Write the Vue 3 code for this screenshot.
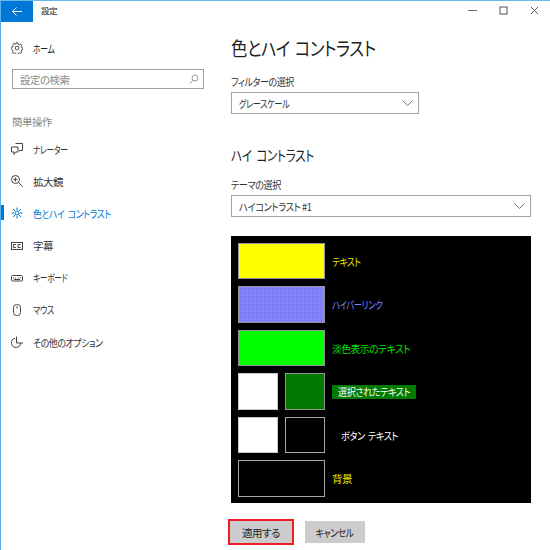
<script setup>
const navItems = [
  { label: 'ナレーター', icon: 'narrator', fit: 'c74' },
  { label: '拡大鏡', icon: 'zoom', fit: '' },
  { label: '色とハイ コントラスト', icon: 'sun', active: true, fit: 'c85' },
  { label: '字幕', icon: 'cc', fit: '' },
  { label: 'キーボード', icon: 'kbd', fit: 'c74' },
  { label: 'マウス', icon: 'mouse', fit: 'c78' },
  { label: 'その他のオプション', icon: 'other', fit: 'c85' },
]
</script>

<template>
  <div class="window">
    <header class="titlebar">
      <button class="back" aria-label="戻る">
        <svg width="10" height="9" viewBox="0 0 10 9" fill="none" stroke="#fff" stroke-width="1"><path d="M0.500 4.500H10M4.500 0.500L0.500 4.500L4.500 8.500" /></svg>
      </button>
      <span class="apptitle">設定</span>
      <div class="winctl">
        <svg width="9" height="9" viewBox="0 0 9 9" fill="none" stroke="#666"><path d="M0 4.500H9" /></svg>
        <svg width="9" height="9" viewBox="0 0 9 9" fill="none" stroke="#555"><rect x="1" y="1" width="7" height="7" /></svg>
        <svg width="9" height="9" viewBox="0 0 9 9" fill="none" stroke="#555"><path d="M1 1L8 8M8 1L1 8" /></svg>
      </div>
    </header>
    <div class="body">
      <aside class="sidebar">
        <div class="home">
          <svg class="ico" width="12" height="12" viewBox="0 0 14 14" fill="none" stroke="#444" stroke-width="1.100">
            <circle cx="7" cy="7" r="2.200" />
            <path d="M6 1h2l.4 1.700 1.400.6 1.500-.9 1.300 1.400-.9 1.400.6 1.400 1.700.4v1.900l-1.700.4-.6 1.400.9 1.500-1.300 1.300-1.500-.9-1.400.6-.4 1.700H6l-.4-1.700-1.400-.6-1.500.9-1.300-1.300.9-1.500-.6-1.400L.5 8V6.100l1.700-.4.6-1.400-.9-1.400 1.300-1.400 1.500.9 1.400-.6z" />
          </svg>
          <span class="fit c75">ホーム</span>
        </div>
        <div class="search">
          <span>設定の検索</span>
          <svg width="10" height="10" viewBox="0 0 10 10" fill="none" stroke="#999"><circle cx="6" cy="4" r="3" /><path d="M4 6.200L.8 9.500" /></svg>
        </div>
        <div class="group">簡単操作</div>
        <nav class="nav">
          <div v-for="item in navItems" :key="item.label" class="nav-item" :class="{ active: item.active }">
            <span class="indicator"></span>
            <svg class="ico" width="12" height="12" viewBox="0 0 12 12" fill="none" stroke="currentColor" stroke-width="1">
              <template v-if="item.icon === 'narrator'">
                <path d="M4.500 .5H11.500V7.500H8M.5 4H7V9H4.500L3 11.500V9H.5z" />
              </template>
              <template v-else-if="item.icon === 'zoom'">
                <circle cx="4.500" cy="4.500" r="4" /><path d="M7.500 7.500l4 4M2.500 4.500h4M4.500 2.500v4" />
              </template>
              <template v-else-if="item.icon === 'sun'">
                <circle cx="6" cy="6" r="2" /><path d="M6 .5v2.500M6 9v2.500M.5 6H3M9 6h2.500M2 2l2 2M8 8l2 2M10 2L8 4M4 8l-2 2" />
              </template>
              <template v-else-if="item.icon === 'cc'">
                <rect x=".5" y="2.500" width="11" height="7" /><path d="M5 4.500H2.500v3H5M9.500 4.500H7v3h2.500" />
              </template>
              <template v-else-if="item.icon === 'kbd'">
                <rect x=".5" y="3.500" width="11" height="5.500" rx="1" /><path d="M2 6h1M4 6h1M6.500 6h1M9 6h1M3 7.500h6" />
              </template>
              <template v-else-if="item.icon === 'mouse'">
                <rect x="2.500" y=".5" width="7" height="11" rx="3" /><path d="M6 2v2.500" />
              </template>
              <template v-else>
                <path d="M4 2.300A4.600 4.600 0 1 0 9.600 7M5.500 .5V7H12" />
              </template>
            </svg>
            <span class="fit" :class="item.fit">{{ item.label }}</span>
          </div>
        </nav>
      </aside>
      <main class="main">
        <h1 class="fit c86">色とハイ コントラスト</h1>
        <label class="lbl first fit c86">フィルターの選択</label>
        <div class="combo short">
          <span class="fit c78">グレースケール</span>
          <svg width="11" height="6" viewBox="0 0 11 6" fill="none" stroke="#777"><path d="M.5.5l5 5 5-5" /></svg>
        </div>
        <h2 class="fit c81">ハイ コントラスト</h2>
        <label class="lbl second fit c87">テーマの選択</label>
        <div class="combo">
          <span class="fit c89">ハイコントラスト #1</span>
          <svg width="11" height="6" viewBox="0 0 11 6" fill="none" stroke="#777"><path d="M.5.5l5 5 5-5" /></svg>
        </div>
        <section class="preview">
          <div class="row">
            <div class="sw wide yellow"></div>
            <span class="fit c83 t-yellow">テキスト</span>
          </div>
          <div class="row tall">
            <div class="sw wide violet"></div>
            <span class="fit c80 t-violet">ハイパーリンク</span>
          </div>
          <div class="row">
            <div class="sw wide lime"></div>
            <span class="fit c93 t-lime">淡色表示のテキスト</span>
          </div>
          <div class="row tall">
            <div class="pair">
              <div class="sw white"></div>
              <div class="sw green"></div>
            </div>
            <span class="t-sel"><span class="fit c87">選択されたテキスト</span></span>
          </div>
          <div class="row">
            <div class="pair">
              <div class="sw white"></div>
              <div class="sw blackb"></div>
            </div>
            <span class="fit c87 t-btn">ボタン テキスト</span>
          </div>
          <div class="row tall">
            <div class="sw wide blackb"></div>
            <span class="t-yellow">背景</span>
          </div>
        </section>
        <div class="actions">
          <button class="btn apply">適用する</button>
          <button class="btn cancel"><span class="fit c84 mid">キャンセル</span></button>
        </div>
      </main>
    </div>
  </div>
</template>

<style>
html, body { margin: 0; background: #fff; }
</style>

<style scoped>
.window {
  width: 550px;
  height: 550px;
  box-sizing: border-box;
  border-left: 1px solid #5aaeea;
  border-top: 1px solid #6db6ec;
  background: #fff;
  display: flex;
  flex-direction: column;
  overflow: hidden;
  font-family: "Noto Sans CJK JP", "Noto Sans", sans-serif;
  font-size: 10px;
  color: #222;
  font-feature-settings: "palt";
  letter-spacing: -0.5px;
}
.fit { display: inline-block; white-space: pre; transform-origin: left center; }
.mid { transform-origin: center; }
.c74 { transform: scaleX(.74); }
.c75 { transform: scaleX(.75); }
.c78 { transform: scaleX(.78); }
.c80 { transform: scaleX(.8); }
.c81 { transform: scaleX(.81); }
.c83 { transform: scaleX(.83); }
.c84 { transform: scaleX(.84); }
.c85 { transform: scaleX(.85); word-spacing: 2px; }
.c86 { transform: scaleX(.86); word-spacing: 2px; }
.c87 { transform: scaleX(.87); }
.c89 { transform: scaleX(.89); }
.c93 { transform: scaleX(.93); }
.titlebar {
  height: 21px;
  flex: none;
  display: flex;
  align-items: center;
}
.back {
  width: 32px;
  height: 21px;
  border: 0;
  padding: 0;
  background: #0078d7;
  display: flex;
  align-items: center;
  justify-content: center;
}
.apptitle { margin-left: 8px; font-size: 8.500px; color: #222; margin-top: -4px; }
.winctl {
  margin-left: auto;
  display: flex;
  gap: 22px;
  padding-right: 11px;
  margin-top: -2px;
}
.body { flex: 1; display: flex; min-height: 0; }
.sidebar { width: 230px; flex: none; display: flex; flex-direction: column; }
.ico { flex: none; color: #444; }
.home {
  display: flex;
  align-items: center;
  gap: 10px;
  padding: 19px 0 0 10px;
  height: 14px;
  font-size: 10.500px;
}
.search {
  margin: 14px 17px 0 11px;
  height: 20px;
  width: 192px;
  box-sizing: border-box;
  border: 1.500px solid #a0a0a0;
  display: flex;
  align-items: center;
  justify-content: space-between;
  padding: 0 4px 0 7px;
  font-size: 10.500px;
  color: #8a8a8a;
}
.group { margin: 25px 0 0 11px; height: 16px; line-height: 16px; font-size: 10.500px; color: #8a8a8a; }
.nav { margin-top: 3px; display: flex; flex-direction: column; }
.nav-item {
  position: relative;
  height: 32.170px;
  display: flex;
  align-items: center;
  gap: 10px;
  padding-left: 10px;
  font-size: 10.500px;
  color: #333;
}
.nav-item .ico { color: #444; }
.nav-item.active { color: #0078d7; }
.nav-item.active .ico { color: #0078d7; }
.indicator { display: none; }
.nav-item.active .indicator {
  display: block;
  position: absolute;
  left: 0;
  top: 8px;
  width: 3px;
  height: 15px;
  background: #0078d7;
}
.main { flex: 1; display: flex; flex-direction: column; align-items: flex-start; }
h1 {
  margin: 13px 0 0;
  height: 26px;
  line-height: 26px;
  font-size: 19px;
  font-weight: 400;
  color: #222;
}
h2 {
  margin: 31px 0 0;
  height: 20px;
  line-height: 20px;
  font-size: 14.500px;
  font-weight: 400;
  color: #222;
  word-spacing: 3px;
}
.lbl { height: 14px; line-height: 14px; font-size: 10.500px; color: #333; }
.lbl.first { margin-top: 14px; }
.lbl.second { margin-top: 13px; }
.combo {
  margin-top: 3px;
  width: 300px;
  height: 22px;
  box-sizing: border-box;
  border: 1.500px solid #a3a3a3;
  display: flex;
  align-items: center;
  justify-content: space-between;
  padding: 0 5px 0 7px;
  font-size: 10.500px;
  color: #333;
}
.combo.short { width: 188px; }
.preview {
  margin-top: 19px;
  width: 300px;
  height: 267px;
  background: #000;
  box-sizing: border-box;
  padding: 7px 7px 0;
  display: flex;
  flex-direction: column;
  gap: 7px;
}
.row { display: flex; align-items: center; gap: 7px; font-size: 10.500px; height: 36px; }
.row.tall { height: 37px; }
.pair { width: 87px; display: flex; justify-content: space-between; }
.sw { box-sizing: border-box; border: 1.500px solid #959595; height: 100%; }
.wide { width: 87px; }
.pair .sw { width: 40px; height: 100%; }
.pair { height: 100%; }
.yellow { background: #ff0; }
.violet {
  background-color: #8484ff;
  background-image: radial-gradient(#6a5ce0 .5px, transparent .8px);
  background-size: 4px 4px;
}
.lime { background: #0f0; }
.white { background: #fff; border-color: #c8c8c8; }
.green { background: #007a00; }
.blackb { background: #000; border-color: #a5a5a5; }
.t-yellow { color: #e8e800; }
.t-violet { color: #8080ff; }
.t-lime { color: #00e000; }
.t-sel { background: #007a00; color: #fff; width: 84px; box-sizing: border-box; padding-left: 6px; height: 14px; line-height: 14px; white-space: nowrap; overflow: hidden; }
.t-btn { color: #fff; margin-left: 9px; word-spacing: 2px; }
.actions { display: flex; align-items: center; gap: 11px; margin: 16px 0 0 -3px; }
.btn {
  border: 0;
  padding: 0;
  font-family: inherit;
  font-size: 10.500px;
  letter-spacing: inherit;
  font-feature-settings: inherit;
  color: #222;
  background: #ccc;
}
.apply { width: 66px; height: 26px; box-sizing: border-box; border: 2.500px solid #ed1c24; }
.cancel { width: 60px; height: 22px; }
</style>
